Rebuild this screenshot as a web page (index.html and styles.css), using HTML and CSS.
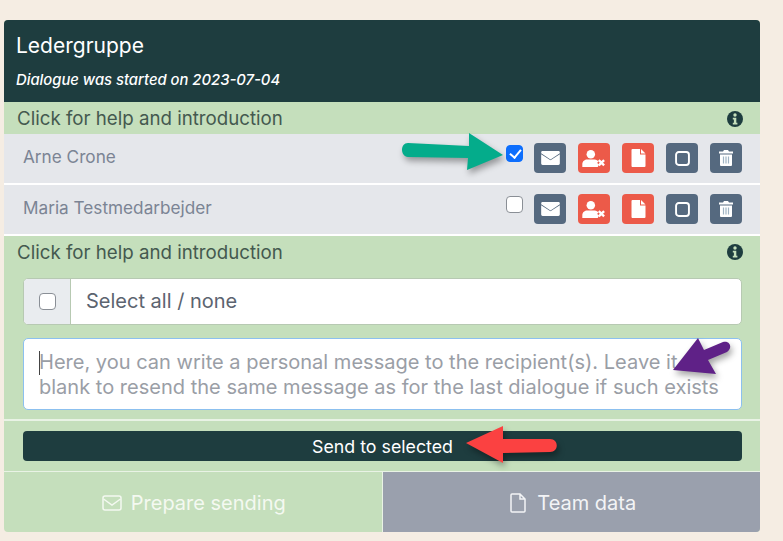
FILE: index.html
```html
<!DOCTYPE html>
<html lang="en">
<head>
    <meta charset="UTF-8">
    <title>Ledergruppe</title>
    <link rel="stylesheet" href="styles.css">
</head>
<body>
    <div class="card">
        <div class="card-header">
            <h1>Ledergruppe</h1>
            <p>Dialogue was started on 2023-07-04</p>
        </div>

        <div class="help-bar">
            <span>Click for help and introduction</span>
            <svg class="info" viewBox="0 0 16 16"><circle cx="8" cy="8" r="8" fill="#1e3d3f"/><circle cx="8" cy="4" r="1.700" fill="#c5dfbc"/><path d="M5.800 6.800h3.500v5h1.100v1.600H5.800v-1.600h1.100V8.400H5.800z" fill="#c5dfbc"/></svg>
        </div>

        <div class="person">
            <span class="person-name">Arne Crone</span>
            <input type="checkbox" class="pick" checked>
            <div class="actions">
                <button class="act slate"><svg class="ic-mail" viewBox="0 0 20 15"><path d="M1.500 0h17A1.500 1.500 0 0 1 20 1.500v1L10 9 0 2.500v-1A1.500 1.500 0 0 1 1.500 0z" fill="#fff"/><path d="M0 3.400l10 6.500 10-6.500v10.100a1.500 1.500 0 0 1-1.500 1.500h-17A1.500 1.500 0 0 1 0 13.500z" fill="#fff"/></svg></button>
                <button class="act red"><svg class="ic-user" viewBox="0 0 22 16"><circle cx="8" cy="4" r="4" fill="#fff"/><path d="M0 16v-2.500C0 10.500 2.500 9 4.500 9h7c2 0 3 1 3.500 2l-1 1 1.500 2-1 2z" fill="#fff"/><path d="M15.500 9.500l5 5m0-5l-5 5" stroke="#fff" stroke-width="2.200"/></svg></button>
                <button class="act red"><svg class="ic-doc" viewBox="0 0 14 18"><path d="M0 1a1 1 0 0 1 1-1h7.500v5.500H14V17a1 1 0 0 1-1 1H1a1 1 0 0 1-1-1z" fill="#fff"/><path d="M9.500 0L14 4.500H9.500z" fill="#fff"/></svg></button>
                <button class="act slate"><svg class="ic-square" viewBox="0 0 14 14"><rect x="1" y="1" width="12" height="12" rx="2.500" fill="none" stroke="#fff" stroke-width="1.800"/></svg></button>
                <button class="act slate"><svg class="ic-trash" viewBox="0 0 14 16"><path d="M5 0h4l1 1.500h4v2H0v-2h4z" fill="#fff"/><path d="M1 4.500h12V15a1 1 0 0 1-1 1H2a1 1 0 0 1-1-1z" fill="#fff"/><path d="M4.500 6.500v7M7 6.500v7M9.500 6.500v7" stroke="#9fb4c4" stroke-width="1.200"/></svg></button>
            </div>
        </div>

        <div class="person">
            <span class="person-name">Maria Testmedarbejder</span>
            <input type="checkbox" class="pick">
            <div class="actions">
                <button class="act slate"><svg class="ic-mail" viewBox="0 0 20 15"><path d="M1.500 0h17A1.500 1.500 0 0 1 20 1.500v1L10 9 0 2.500v-1A1.500 1.500 0 0 1 1.500 0z" fill="#fff"/><path d="M0 3.400l10 6.500 10-6.500v10.100a1.500 1.500 0 0 1-1.500 1.500h-17A1.500 1.500 0 0 1 0 13.500z" fill="#fff"/></svg></button>
                <button class="act red"><svg class="ic-user" viewBox="0 0 22 16"><circle cx="8" cy="4" r="4" fill="#fff"/><path d="M0 16v-2.500C0 10.500 2.500 9 4.500 9h7c2 0 3 1 3.500 2l-1 1 1.500 2-1 2z" fill="#fff"/><path d="M15.500 9.500l5 5m0-5l-5 5" stroke="#fff" stroke-width="2.200"/></svg></button>
                <button class="act red"><svg class="ic-doc" viewBox="0 0 14 18"><path d="M0 1a1 1 0 0 1 1-1h7.500v5.500H14V17a1 1 0 0 1-1 1H1a1 1 0 0 1-1-1z" fill="#fff"/><path d="M9.500 0L14 4.500H9.500z" fill="#fff"/></svg></button>
                <button class="act slate"><svg class="ic-square" viewBox="0 0 14 14"><rect x="1" y="1" width="12" height="12" rx="2.500" fill="none" stroke="#fff" stroke-width="1.800"/></svg></button>
                <button class="act slate"><svg class="ic-trash" viewBox="0 0 14 16"><path d="M5 0h4l1 1.500h4v2H0v-2h4z" fill="#fff"/><path d="M1 4.500h12V15a1 1 0 0 1-1 1H2a1 1 0 0 1-1-1z" fill="#fff"/><path d="M4.500 6.500v7M7 6.500v7M9.500 6.500v7" stroke="#9fb4c4" stroke-width="1.200"/></svg></button>
            </div>
        </div>

        <div class="compose">
            <div class="help-bar plain">
                <span>Click for help and introduction</span>
                <svg class="info" viewBox="0 0 16 16"><circle cx="8" cy="8" r="8" fill="#1e3d3f"/><circle cx="8" cy="4" r="1.700" fill="#c5dfbc"/><path d="M5.800 6.800h3.500v5h1.100v1.600H5.800v-1.600h1.100V8.400H5.800z" fill="#c5dfbc"/></svg>
            </div>
            <div class="select-group">
                <div class="select-box"><input type="checkbox" class="pick"></div>
                <div class="select-label">Select all / none</div>
            </div>
            <div class="message"><span class="caret"></span>Here, you can write a personal message to the recipient(s). Leave it blank to resend the same message as for the last dialogue if such exists</div>
        </div>

        <div class="send-row">
            <button class="send">Send to selected</button>
        </div>

        <div class="tabs">
            <div class="tab tab-active">
                <svg viewBox="0 0 20 16"><rect x="1" y="1" width="18" height="14" rx="2" fill="none" stroke="currentColor" stroke-width="1.500"/><path d="M1.500 4l8.500 6 8.500-6" fill="none" stroke="currentColor" stroke-width="1.500"/></svg>
                Prepare sending
            </div>
            <div class="tab tab-other">
                <svg class="tab-doc" viewBox="0 0 16 20"><path d="M1 2a1 1 0 0 1 1-1h8l5 5v12a1 1 0 0 1-1 1H2a1 1 0 0 1-1-1zM10 1v5h5" fill="none" stroke="currentColor" stroke-width="1.500"/></svg>
                Team data
            </div>
        </div>

        <!-- arrows pasted over the screenshot -->
        <svg class="arrow arrow-green" viewBox="0 0 106 42"><path d="M6 10L67 13V0L101 22 65 37 66 25 6 24C-2 23-2 10 6 10z" fill="#04ac8b"/></svg>
        <svg class="arrow arrow-purple" viewBox="0 0 60 40"><path d="M2 33L27 1l6 12 19-8c7-2 10 6 4 10L37 23l8 14z" fill="#5f2187"/></svg>
        <svg class="arrow arrow-red" viewBox="0 0 92 40"><path d="M0 17L37 0V13H84C93 13 93 26 84 26L37 27V37z" fill="#fb4141"/></svg>
    </div>
</body>
</html>
```

FILE: styles.css
```css
* {
    margin: 0;
    padding: 0;
    box-sizing: border-box;
}

body {
    font-family: Inter, "Liberation Sans", sans-serif;
    background: #f5ede3;
    height: 541px;
    overflow: hidden;
    padding: 20px 23px 0 4px;
}

.card {
    position: relative;
    background: #c5dfbc;
    border-radius: 4px;
    overflow: hidden;
}

.card-header {
    height: 83px;
    background: #1e3d3f;
    color: white;
    padding: 14px 12px 0;
    border-bottom: 1px solid #c5dfbc;
}

.card-header h1 {
    font-size: 21px;
    font-weight: 400;
    line-height: 24px;
}

.card-header p {
    font-size: 14.800px;
    font-weight: 500;
    font-style: italic;
    line-height: 20px;
    margin-top: 12px;
}

.help-bar {
    height: 31px;
    display: flex;
    align-items: center;
    justify-content: space-between;
    padding: 0 17px 0 13px;
    font-size: 18.700px;
    color: #44594f;
}

.help-bar.plain {
    padding: 0;
    height: 32px;
    margin: 0 -1px 10px -6px;
}

.info {
    width: 16px;
    height: 16px;
}

.person {
    height: 51px;
    background: #e5e7eb;
    border-bottom: 2px solid white;
    display: flex;
    align-items: center;
    padding: 0 18px 4px 19px;
    font-size: 17.200px;
    color: #7b8494;
}

.person-name {
    flex: 1;
}

.pick {
    appearance: none;
    width: 17px;
    height: 17px;
    background: white;
    border: 1.500px solid #8a8f96;
    border-radius: 4px;
    position: relative;
    display: block;
}

.pick:checked {
    background: #0d6efd;
    border-color: #0d6efd;
}

.pick:checked::after {
    content: "";
    position: absolute;
    left: 4.500px;
    top: 1px;
    width: 5px;
    height: 9px;
    border: solid white;
    border-width: 0 2.500px 2.500px 0;
    transform: rotate(40deg);
}

.person .pick {
    margin: -6px 11px 0 0;
}

.actions {
    display: flex;
    gap: 12px;
    margin-top: 3px;
}

.act {
    width: 32px;
    height: 30px;
    border: none;
    border-radius: 4px;
    display: flex;
    align-items: center;
    justify-content: center;
}

.ic-mail {
    width: 19px;
    height: 14px;
}

.ic-user {
    width: 24px;
    height: 17px;
}

.ic-doc {
    width: 15px;
    height: 18px;
}

.ic-square {
    width: 15px;
    height: 15px;
}

.ic-trash {
    width: 14px;
    height: 16px;
}

.slate {
    background: #55697f;
}

.red {
    background: #ec5a49;
}

.compose {
    padding: 0 18px 10px 19px;
    height: 185px;
    border-bottom: 2px solid #e9f3e5;
}

.select-group {
    display: flex;
    height: 47px;
    border: 1px solid #b7c9b2;
    border-radius: 5px;
    overflow: hidden;
    background: white;
}

.select-box {
    width: 47px;
    background: #e9ecef;
    border-right: 1px solid #b7c9b2;
    display: flex;
    align-items: center;
    justify-content: center;
}

.select-label {
    flex: 1;
    font-size: 20px;
    line-height: 45px;
    padding-left: 15px;
    color: #5c6470;
}

.message {
    position: relative;
    height: 72px;
    margin-top: 13px;
    background: white;
    border: 1px solid #8cc0ef;
    border-radius: 5px;
    padding: 11px 14px 0 15px;
    font-size: 20.050px;
    line-height: 25px;
    color: #9a9ea6;
}

.caret {
    position: absolute;
    left: 15px;
    top: 12px;
    width: 1px;
    height: 24px;
    background: #444;
}

.send-row {
    height: 51px;
    padding: 10px 18px 0 19px;
    border-bottom: 1px solid #e9f3e5;
}

.send {
    display: block;
    width: 100%;
    height: 30px;
    background: #1e3d3f;
    color: white;
    border: none;
    border-radius: 4px;
    font-family: inherit;
    font-size: 17.800px;
}

.tabs {
    display: flex;
    height: 60px;
}

.tab {
    flex: 1;
    display: flex;
    align-items: center;
    justify-content: center;
    gap: 9px;
    padding: 2px 0 0 2px;
    font-size: 20px;
}

.tab svg {
    width: 20px;
    height: 16px;
}

.tab svg.tab-doc {
    height: 20px;
}

.tab-active {
    color: #f4f9f1;
    border-right: 1px solid #e9f3e5;
}

.tab-other {
    background: #9aa0ad;
    color: #f3f4f6;
}

.arrow {
    position: absolute;
    filter: drop-shadow(2px 4px 3px rgba(0,0,0,0.35));
}

.arrow-green {
    left: 398px;
    top: 113px;
    width: 106px;
    height: 42px;
}

.arrow-purple {
    left: 667px;
    top: 317px;
    width: 60px;
    height: 40px;
}

.arrow-red {
    left: 462px;
    top: 406px;
    width: 92px;
    height: 40px;
}
```
